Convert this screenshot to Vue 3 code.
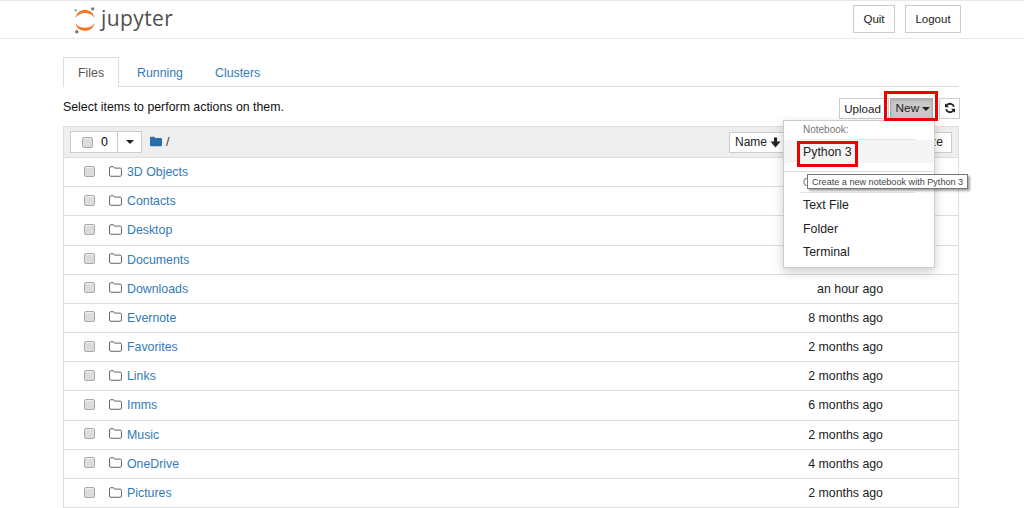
<script setup>
const rows = [
  { name: '3D Objects', time: '' },
  { name: 'Contacts', time: '' },
  { name: 'Desktop', time: '' },
  { name: 'Documents', time: '' },
  { name: 'Downloads', time: 'an hour ago' },
  { name: 'Evernote', time: '8 months ago' },
  { name: 'Favorites', time: '2 months ago' },
  { name: 'Links', time: '2 months ago' },
  { name: 'Imms', time: '6 months ago' },
  { name: 'Music', time: '2 months ago' },
  { name: 'OneDrive', time: '4 months ago' },
  { name: 'Pictures', time: '2 months ago' }
]
</script>

<template>
  <div class="page">
    <header class="top">
      <div class="brand">
        <svg class="logo" width="24" height="28" viewBox="0 0 24 28">
          <path d="M2.500 12C3.500 6.200 7.500 4 12 4s8.500 2.200 9.500 8C19.500 8.500 16 7 12 7S4.500 8.500 2.500 12Z" fill="#f37726"/>
          <path d="M2.500 17C3.500 22.500 7.500 24.800 12 24.800s8.500-2.300 9.500-7.800C19.500 20.500 16 21.800 12 21.800S4.500 20.500 2.500 17Z" fill="#f37726"/>
          <circle cx="19.700" cy="2.800" r="1.600" fill="#767677"/>
          <circle cx="2.700" cy="4.200" r="1" fill="#767677"/>
          <circle cx="3.800" cy="25.800" r="1.700" fill="#767677"/>
        </svg>
        <span class="wordmark">jupyter</span>
      </div>
      <div class="top-actions">
        <button class="btn top-btn">Quit</button>
        <button class="btn top-btn">Logout</button>
      </div>
    </header>

    <main class="container">
      <nav class="tabs">
        <a class="tab active">Files</a>
        <a class="tab">Running</a>
        <a class="tab">Clusters</a>
      </nav>

      <div class="toolbar">
        <span>Select items to perform actions on them.</span>
        <div class="tool-btns">
          <button class="btn small">Upload</button>
          <button class="btn small new">New <i class="caret"></i></button>
          <button class="btn small refresh">
            <svg width="12" height="12" viewBox="0 0 24 24" fill="none" stroke="#222" stroke-width="3.600">
              <path d="M20 9.500A8.500 8.500 0 0 0 5.500 6.500L3.800 8.500"/>
              <path d="M4 14.500A8.500 8.500 0 0 0 18.500 17.500L20.200 15.500"/>
              <path d="M2 2.500V10.500H10Z" fill="#222" stroke="none"/>
              <path d="M22 21.500V13.500H14Z" fill="#222" stroke="none"/>
            </svg>
          </button>
        </div>
      </div>

      <section class="list">
        <div class="list-head">
          <div class="select-group">
            <span class="sel-main"><i class="check"></i><span>0</span></span>
            <span class="sel-caret"><i class="caret dark"></i></span>
          </div>
          <svg class="head-folder" width="12" height="11" viewBox="0 0 14 12">
            <path d="M0 2C0 1 .7.500 1.500.500H5L6.300 2H12.500C13.400 2 14 2.600 14 3.400V10C14 10.900 13.400 11.500 12.500 11.500H1.500C.7 11.500 0 10.900 0 10Z" fill="#296eaa"/>
          </svg>
          <span class="crumb">/</span>
          <button class="btn sort">Name
            <svg width="11" height="11" viewBox="0 0 12 12">
              <path d="M4.300 0.500H7.700V5H11.500L6 11.500L.5 5H4.300Z" fill="#222"/>
            </svg>
          </button>
          <button class="btn sort-end">File size</button>
        </div>
        <div v-for="row in rows" :key="row.name" class="row">
          <i class="check"></i>
          <svg class="folder" width="13" height="11" viewBox="0 0 14 12" fill="none" stroke="#555" stroke-width="1">
            <path d="M.5 2.200C.5 1.300 1 .800 1.800 .800H4.800L6 2.300H12C13 2.300 13.500 2.800 13.500 3.700V9.900C13.500 10.700 13 11.200 12.200 11.200H1.800C1 11.200 .5 10.700 .5 9.900Z"/>
          </svg>
          <a class="name">{{ row.name }}</a>
          <span class="time">{{ row.time }}</span>
        </div>
      </section>
    </main>

    <div class="menu">
      <div class="menu-label first">Notebook:</div>
      <div class="menu-item hover">Python 3</div>
      <div class="menu-sep"></div>
      <div class="menu-label other">Other:</div>
      <div class="menu-item">Text File</div>
      <div class="menu-item">Folder</div>
      <div class="menu-item">Terminal</div>
    </div>
    <div class="tooltip">Create a new notebook with Python 3</div>
    <div class="mark mark-new"></div>
    <div class="mark mark-py"></div>
  </div>
</template>

<style scoped>
.page {
  position: relative;
  width: 1024px;
  height: 508px;
  overflow: hidden;
  background: #fff;
  color: #000;
  font-family: "Liberation Sans", Arial, sans-serif;
  font-size: 12.350px;
}
.top {
  display: flex;
  justify-content: space-between;
  align-items: center;
  height: 37px;
  box-sizing: content-box;
  border-top: 1px solid #e7e7e7;
  border-bottom: 1px solid #e7e7e7;
  padding: 0 63px 0 73px;
}
.brand { display: flex; align-items: center; gap: 4px; }
.logo { display: block; }
.wordmark {
  font-family: "Open Sans", sans-serif;
  font-size: 21px;
  line-height: 28px;
  color: #4e4e4e;
  letter-spacing: .4px;
  margin-top: -3px;
}
.top-actions { display: flex; gap: 10px; margin-top: -1px; }
.btn {
  font-family: inherit;
  font-size: 12px;
  color: #222;
  background: #fff;
  border: 1px solid #ccc;
  padding: 0;
  margin: 0;
  box-sizing: border-box;
  border-radius: 0;
}
.top-btn { height: 28px; font-size: 11.500px; }
.top-btn:first-child { width: 42px; }
.top-btn:last-child { width: 56px; }

.container { width: 896px; margin: 18px 0 0 63px; }
.tabs {
  display: flex;
  height: 30px;
  box-sizing: border-box;
  border-bottom: 1px solid #ddd;
}
.tab {
  box-sizing: border-box;
  height: 30px;
  padding: 8px 14px 0;
  border: 1px solid transparent;
  border-bottom: 0;
  color: #337ab7;
  line-height: 15px;
}
.tab:nth-child(2) { padding-left: 17px; padding-right: 13px; }
.tab:nth-child(3) { padding-left: 17px; }
.tab.active {
  width: 56px;
  padding-left: 14px;
  background: #fff;
  color: #555;
  border-color: #ddd;
}
.toolbar {
  display: flex;
  justify-content: space-between;
  align-items: center;
  height: 39px;
  color: #111;
}
.tool-btns { display: flex; align-items: center; margin-top: 3px; margin-right: -1px; }
.small { height: 21px; font-size: 11.800px; }
.tool-btns .btn:first-child { width: 50px; padding-right: 3px; font-size: 11.600px; }
.new {
  width: 43px;
  margin-left: 1px;
  padding-left: 3px;
  background: #c9c9c9;
  border-color: #a9a9a9;
  box-shadow: inset 0 2px 3px rgba(0, 0, 0, .12);
}
.refresh {
  width: 21px;
  margin-left: 6px;
  display: flex;
  align-items: center;
  justify-content: center;
}
.caret {
  display: inline-block;
  width: 0;
  height: 0;
  margin-left: 0;
  vertical-align: middle;
  border-top: 4px solid #222;
  border-left: 4px solid transparent;
  border-right: 4px solid transparent;
}
.list {
  border: 1px solid #ddd;
  height: 382px;
  box-sizing: border-box;
}
.list-head {
  display: flex;
  align-items: center;
  height: 30px;
  padding: 0 6px;
  background: #eee;
  border-bottom: 1px solid #ddd;
  box-sizing: content-box;
}
.select-group { display: flex; height: 22px; }
.sel-main {
  display: flex;
  align-items: center;
  gap: 8px;
  width: 48px;
  padding-left: 11px;
  box-sizing: border-box;
  background: #fff;
  border: 1px solid #ccc;
}
.sel-caret {
  display: flex;
  align-items: center;
  justify-content: center;
  width: 24px;
  box-sizing: border-box;
  background: #fff;
  border: 1px solid #ccc;
  border-left: 0;
}
.head-folder { margin-left: 8px; margin-top: -1px; }
.crumb { margin-left: 4px; color: #333; margin-top: -1px; }
.sort {
  display: flex;
  align-items: center;
  justify-content: flex-start;
  gap: 3px;
  width: 64px;
  height: 21px;
  padding-left: 5px;
  margin-left: auto;
}
.sort-end {
  height: 21px;
  width: 160px;
  margin-left: -1px;
  text-align: right;
  padding-right: 8px;
  white-space: nowrap;
}
.check {
  display: block;
  flex: none;
  box-sizing: border-box;
  width: 11px;
  height: 11px;
  background: #dcdcdc;
  border: 1px solid #a9a9a9;
  border-radius: 2px;
  box-shadow: inset 0 1px 1px rgba(255, 255, 255, .6);
}
.row {
  display: flex;
  align-items: center;
  box-sizing: border-box;
  height: 29.180px;
  padding: 0 75px 0 20px;
  border-bottom: 1px solid #ddd;
}
.row:last-child { border-bottom: 0; }
.row .check { position: relative; top: -1px; }
.folder { margin-left: 14px; position: relative; top: -1px; }
.name { margin-left: 5px; color: #337ab7; }
.time { margin-left: auto; color: #222; }

.menu {
  position: absolute;
  left: 783px;
  top: 120px;
  width: 152px;
  height: 148px;
  box-sizing: border-box;
  background: #fff;
  border: 1px solid #ccc;
  box-shadow: 0 4px 10px rgba(0, 0, 0, .2);
  padding-top: 2px;
}
.menu-label {
  height: 15px;
  padding-left: 19px;
  font-size: 10px;
  line-height: 13px;
  color: #777;
  position: relative;
}
.menu-label.first { height: 17px; }
.menu-label::after {
  content: "";
  position: absolute;
  left: 16px;
  right: 19px;
  bottom: 0;
  border-bottom: 1px solid #e5e5e5;
}
.menu-label.other::after { bottom: -2px; }
.menu-item {
  height: 23.500px;
  padding-left: 19px;
  line-height: 25px;
  color: #222;
}
.menu-item.hover { height: 23px; background: #f5f5f5; }
.menu-sep { border-top: 1px solid #ddd; margin-top: 8px; height: 4px; }
.other { margin-bottom: 2px; }
.tooltip {
  position: absolute;
  left: 807px;
  top: 174px;
  width: 161px;
  height: 15px;
  box-sizing: border-box;
  background: #fff;
  border: 1px solid #767676;
  box-shadow: 2px 2px 2px rgba(0, 0, 0, .35);
  font-size: 9.100px;
  line-height: 14px;
  padding-left: 4px;
  color: #444;
  white-space: nowrap;
}
.mark {
  position: absolute;
  box-sizing: border-box;
  border: 3px solid #ee0000;
}
.mark-new { left: 884px; top: 91px; width: 54px; height: 30px; }
.mark-py { left: 797px; top: 141px; width: 61px; height: 26px; }
</style>
